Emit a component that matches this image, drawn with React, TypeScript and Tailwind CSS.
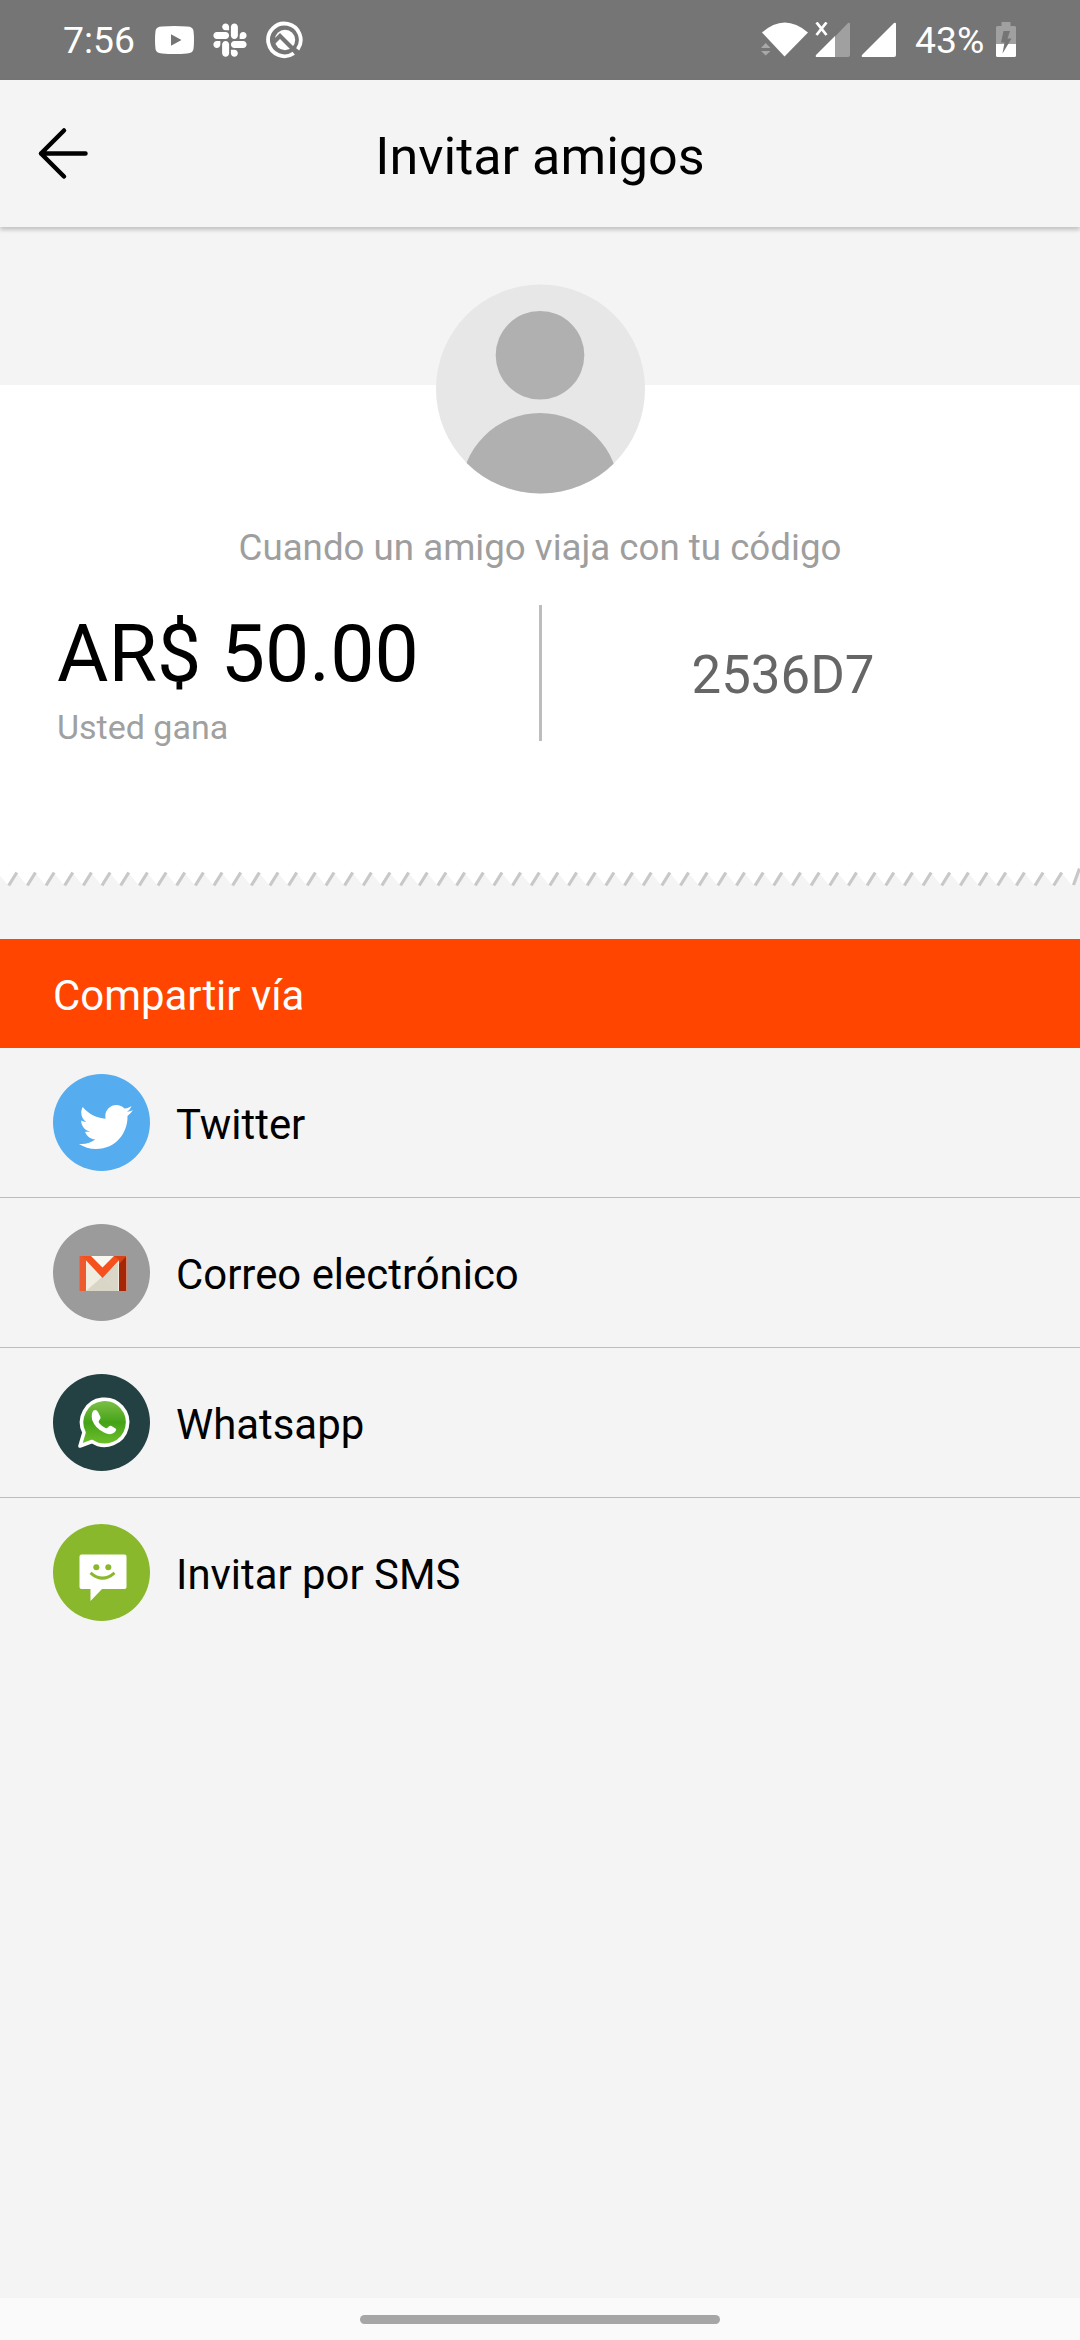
import React from 'react';
import { FaSlack, FaTwitter } from 'react-icons/fa';

interface ShareOption {
  label: string;
  icon: React.ReactNode;
}

const StatusBar = () => (
  <div className="flex h-20 shrink-0 items-center justify-between bg-[#757575] pl-[63px] pr-[64px] text-white">
    <div className="flex items-center">
      <span className="-mt-px w-[71px] text-[37.3px] leading-[44px] whitespace-nowrap">7:56</span>
      <svg className="ml-[21px] h-7 w-[39px]" viewBox="0 0 39 28">
        <path fill="#fff" fillRule="evenodd" d="M7 .6Q19.500 -.4 32 .6Q38 .8 38.500 5Q39.500 14 38.500 23Q38 27.200 32 27.400Q19.500 28.400 7 27.400Q1 27.200.5 23Q-.5 14 .5 5Q1 .8 7 .6ZM16 8.300V19.700L26.500 14Z" />
      </svg>
      <FaSlack className="ml-[17px] size-[38px]" />
      <svg className="ml-[17px] size-[38px]" viewBox="0 0 38 38" fill="none">
        <path d="M27.800 32.200A16.300 16.300 0 1 1 31.700 28.300" stroke="#fff" strokeWidth="3.800" />
        <circle cx="19" cy="19" r="10.200" fill="#fff" />
        <path d="M7.500 21.500L14 15L33 34" stroke="#757575" strokeWidth="4.200" />
      </svg>
    </div>
    <div className="flex items-center">
      <svg className="h-[36px] w-[48px]" viewBox="0 0 48 36">
        <path fill="#fff" d="M1 10.500Q23.500 -9.500 47 10.500L23.500 34.500Z" />
        <path fill="#a8a8a8" d="M0 26L4.700 21L9.500 26ZM0 29H9.500L4.700 33.500Z" />
      </svg>
      <svg className="ml-[6px] h-[36px] w-[35px]" viewBox="0 0 35 36">
        <path fill="#a0a0a0" d="M19.500 15L33 1Q35 0 35 2V33Q35 35 33 35H19.500Z" />
        <path fill="#fff" d="M20 14V35H2Q0 35 1 33Z" />
        <path stroke="#fff" strokeWidth="2.800" d="M1.500 .5L11.500 13M11.500 .5L1.500 13" />
      </svg>
      <svg className="ml-[11px] h-[36px] w-[35px]" viewBox="0 0 35 36">
        <path fill="#fff" d="M33 1Q35 0 35 2V33Q35 35 33 35H2Q0 35 1 33Z" />
      </svg>
      <span className="-mt-px ml-[19px] w-[69px] text-[37.3px] leading-[44px] whitespace-nowrap">43%</span>
      <svg className="ml-[12px] h-[36px] w-5" viewBox="0 0 20 36">
        <path fill="#a0a0a0" d="M5.500 0H14.500V4H18.500Q20 4 20 5.500V22H0V5.500Q0 4 1.500 4H5.500Z" />
        <path fill="#fff" d="M0 22H20V33.500Q20 35 18.500 35H1.500Q0 35 0 33.500Z" />
        <path fill="#757575" d="M7.500 9H14L11.500 16.500H15.500L6.500 31.500L8.500 20.500H5Z" />
      </svg>
    </div>
  </div>
);

const Header = () => (
  <header className="z-10 grid h-[147px] shrink-0 grid-cols-[120px_1fr_120px] items-center bg-[#f4f4f4] shadow-[0_3px_4px_0_rgba(0,0,0,0.2)]">
    <button className="ml-[37px] size-[53px]">
      <svg viewBox="0 0 53 53" fill="none" stroke="#000" strokeWidth="4.500" strokeLinecap="round" strokeLinejoin="round">
        <path d="M48.500 26.500H4M27 3.500L4 26.500L27 49.500" />
      </svg>
    </button>
    <h1 className="pt-[5px] text-center text-[52.1px] leading-[61px]">Invitar amigos</h1>
  </header>
);

const Avatar = () => (
  <svg className="mt-[57px] size-[210px] shrink-0" viewBox="0 0 210 210">
    <clipPath id="avatar-clip">
      <circle cx="105.500" cy="105" r="104.500" />
    </clipPath>
    <g clipPath="url(#avatar-clip)">
      <rect width="210" height="210" fill="#e7e7e7" />
      <circle cx="105" cy="71.200" r="44.300" fill="#b0b0b0" />
      <circle cx="105" cy="208" r="79" fill="#b0b0b0" />
    </g>
  </svg>
);

// torn paper edge under the coupon
const teeth = Array.from({ length: 57 }, (_, i) => 16.3 + i * 18.66);

const TornEdge = () => (
  <svg className="h-[20px] w-full shrink-0" viewBox="0 0 1080 20">
    <path
      fill="#fff"
      d={`M0 0V9L8 18${teeth.map((x) => `L${x} 5.500L${x + 10.400} 18`).join('')}L1080 2V0Z`}
    />
    <path
      stroke="#c8c8c8"
      strokeWidth="3.200"
      d={`${teeth.map((x) => `M${x - 7.6} 18.500L${x + 0.5} 5.500`).join('')}M1073.500 18L1079.500 1.500`}
    />
  </svg>
);

const GmailIcon = () => (
  <svg className="size-[97px]" viewBox="0 0 97 97">
    <rect x="27" y="32" width="47" height="35" fill="#efede0" />
    <path fill="#d9d6c7" d="M33 67L49 53L65 67Z" />
    <path fill="#f8f7f0" d="M38 32H60L49 44Z" />
    <path fill="#c9c5b4" d="M49 53L65 39V67Z" opacity=".55" />
    <path fill="#ee5a30" d="M26.500 32H33V67H26.500Z" />
    <path fill="#a52708" d="M66 36L73.500 32V67H66Z" />
    <path fill="#f4511e" d="M29 32H38L49.500 43.500L61 32H70L49.500 54Z" />
    <path fill="#d84315" d="M61 32H73.500L66 40V36Z" />
  </svg>
);

const WhatsappIcon = () => (
  <svg className="size-[97px]" viewBox="0 0 97 97">
    <defs>
      <linearGradient id="wa-green" x1="0" y1="0" x2="0" y2="1">
        <stop offset="0" stopColor="#7fc24a" />
        <stop offset=".5" stopColor="#45a318" />
        <stop offset="1" stopColor="#72c22c" />
      </linearGradient>
    </defs>
    <path
      fill="url(#wa-green)"
      stroke="#fff"
      strokeWidth="3.600"
      strokeLinejoin="round"
      d="M27 72L31 58.500A23 23 0 1 1 39 67.500Z"
    />
    <path
      fill="#fff"
      d="M40.500 36.500Q43.500 35 45 38L47.500 43Q48 44.500 46 46.500Q45 48 46.500 49.500Q49 52.500 52.500 54Q54 54.600 55 53.200Q56.500 51 58.500 52L62.500 54.500Q64 55.500 62 58Q58 62 51 58.500Q42 54 39.200 46Q37.800 39.500 40.500 36.500Z"
    />
  </svg>
);

const SmsIcon = () => (
  <svg className="size-[97px]" viewBox="0 0 97 97">
    <path fill="#fff" d="M28.500 30.500H71.500Q73.500 30.500 73.500 32.500V63Q73.500 65 71.500 65H49L37.500 77V65H28.500Q26.500 65 26.500 63V32.500Q26.500 30.500 28.500 30.500Z" />
    <circle cx="43.300" cy="43.300" r="3" fill="#8ab82d" />
    <circle cx="55.300" cy="43.300" r="3" fill="#8ab82d" />
    <path d="M37.500 48.800Q49.500 59.500 61.500 48.800" fill="none" stroke="#8ab82d" strokeWidth="3" />
  </svg>
);

const options: ShareOption[] = [
  {
    label: 'Twitter',
    icon: (
      <div className="flex size-[97px] items-center justify-center rounded-full bg-[#55acee] pt-[9px] pl-[9px]">
        <FaTwitter className="size-[54px] text-white" />
      </div>
    ),
  },
  { label: 'Correo electrónico', icon: <div className="size-[97px] rounded-full bg-[#9b9b9b]"><GmailIcon /></div> },
  { label: 'Whatsapp', icon: <div className="size-[97px] rounded-full bg-[#234142]"><WhatsappIcon /></div> },
  { label: 'Invitar por SMS', icon: <div className="size-[97px] rounded-full bg-[#8ab82d]"><SmsIcon /></div> },
];

const ShareList = () => (
  <ul className="flex flex-col">
    {options.map((option) => (
      <li key={option.label} className="flex h-[150px] items-start border-b border-[#bcbcbc] pt-[26px] pl-[53px] last:border-b-0">
        {option.icon}
        <span className="mt-[26px] ml-[26px] text-[41.9px] leading-[49px]">{option.label}</span>
      </li>
    ))}
  </ul>
);

const App: React.FC = () => {
  return (
    <div className="flex h-[2340px] w-[1080px] flex-col overflow-hidden bg-[#f4f4f4] font-[Roboto,sans-serif] text-black">
      <StatusBar />
      <Header />
      <section className="flex h-[640px] shrink-0 flex-col items-center bg-linear-to-b from-[#f4f4f4] from-[158px] to-white to-[158px]">
        <Avatar />
        <p className="mt-[32px] text-[36.7px] leading-[43px] text-[#9e9e9e]">Cuando un amigo viaja con tu código</p>
        <div className="mt-[36px] flex w-full items-start">
          <div className="w-[539px] pt-[3px] pl-[57px]">
            <div className="text-[78.8px] leading-[92px]">AR$ 50.00</div>
            <div className="mt-2 text-[34px] leading-[39px] text-[#a0a0a0]">Usted gana</div>
          </div>
          <div className="h-[136px] w-[3px] bg-[#bdbdbd]" />
          <div className="flex-1 pt-[39px] pr-[56px] text-center text-[52.8px] leading-[62px] text-[#666]">2536D7</div>
        </div>
      </section>
      <TornEdge />
      <h2 className="mt-[52px] h-[109px] shrink-0 bg-[#ff4500] pt-[32px] pl-[53px] text-[41.9px] leading-[49px] text-white">Compartir vía</h2>
      <ShareList />
      <div className="mt-auto flex h-[42px] shrink-0 justify-center bg-[#fafafa] pt-[17px]">
        <div className="h-[9px] w-[360px] rounded-full bg-[#a6a6a6]" />
      </div>
    </div>
  );
};

export default App;
